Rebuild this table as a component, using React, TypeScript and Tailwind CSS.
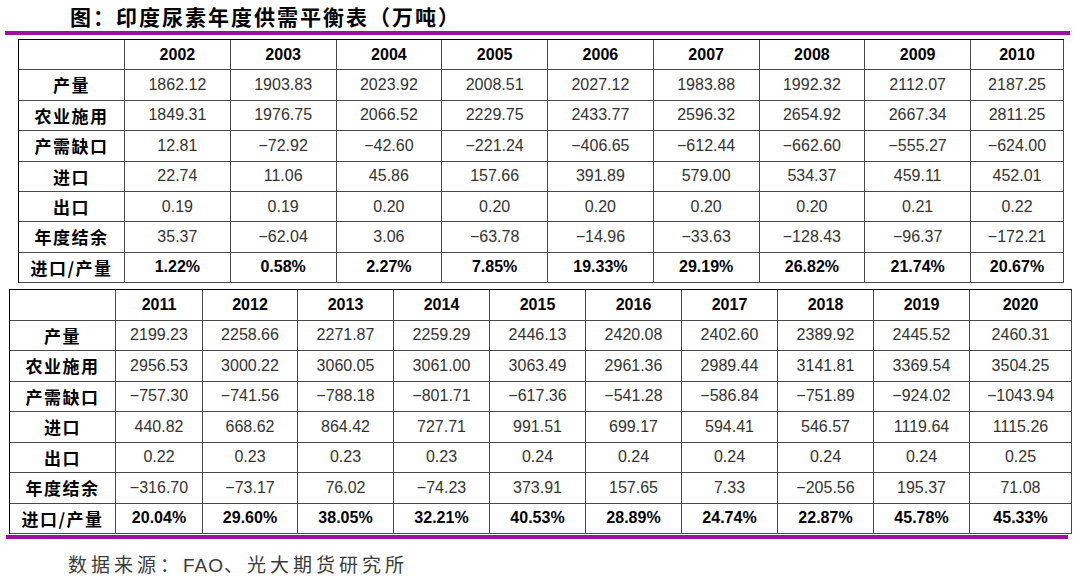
import React from "react";

type Row = { label: string; values: string[]; bold?: boolean };

interface BalanceTableProps {
    years: string[];
    rows: Row[];
    gridClass: string;
    className?: string;
}

const labels = ["产量", "农业施用", "产需缺口", "进口", "出口", "年度结余", "进口/产量"];

const table1: Row[] = [
    ["1862.12", "1903.83", "2023.92", "2008.51", "2027.12", "1983.88", "1992.32", "2112.07", "2187.25"],
    ["1849.31", "1976.75", "2066.52", "2229.75", "2433.77", "2596.32", "2654.92", "2667.34", "2811.25"],
    ["12.81", "−72.92", "−42.60", "−221.24", "−406.65", "−612.44", "−662.60", "−555.27", "−624.00"],
    ["22.74", "11.06", "45.86", "157.66", "391.89", "579.00", "534.37", "459.11", "452.01"],
    ["0.19", "0.19", "0.20", "0.20", "0.20", "0.20", "0.20", "0.21", "0.22"],
    ["35.37", "−62.04", "3.06", "−63.78", "−14.96", "−33.63", "−128.43", "−96.37", "−172.21"],
    ["1.22%", "0.58%", "2.27%", "7.85%", "19.33%", "29.19%", "26.82%", "21.74%", "20.67%"],
].map((values, i) => ({ label: labels[i], values, bold: i === 6 }));

const table2: Row[] = [
    ["2199.23", "2258.66", "2271.87", "2259.29", "2446.13", "2420.08", "2402.60", "2389.92", "2445.52", "2460.31"],
    ["2956.53", "3000.22", "3060.05", "3061.00", "3063.49", "2961.36", "2989.44", "3141.81", "3369.54", "3504.25"],
    ["−757.30", "−741.56", "−788.18", "−801.71", "−617.36", "−541.28", "−586.84", "−751.89", "−924.02", "−1043.94"],
    ["440.82", "668.62", "864.42", "727.71", "991.51", "699.17", "594.41", "546.57", "1119.64", "1115.26"],
    ["0.22", "0.23", "0.23", "0.23", "0.24", "0.24", "0.24", "0.24", "0.24", "0.25"],
    ["−316.70", "−73.17", "76.02", "−74.23", "373.91", "157.65", "7.33", "−205.56", "195.37", "71.08"],
    ["20.04%", "29.60%", "38.05%", "32.21%", "40.53%", "28.89%", "24.74%", "22.87%", "45.78%", "45.33%"],
].map((values, i) => ({ label: labels[i], values, bold: i === 6 }));

const years1 = ["2002", "2003", "2004", "2005", "2006", "2007", "2008", "2009", "2010"];
const years2 = ["2011", "2012", "2013", "2014", "2015", "2016", "2017", "2018", "2019", "2020"];

const cell = "flex items-center justify-center border-r border-b border-[#4a4a4a]";
const num = "font-['Liberation_Sans',Arial,sans-serif] text-[16px]";
const cjk = "font-['Noto_Sans_CJK_SC',sans-serif] font-bold text-[17px] tracking-[1.5px] text-black";

const BalanceTable = ({ years, rows, gridClass, className }: BalanceTableProps) => {
    return (
        <div className={`grid border-t border-l border-black ${gridClass} ${className ?? ""}`}>
            {/* header */}
            <div className={cell} />
            {years.map((y) => (
                <div key={y} className={`${cell} ${num} font-bold text-black`}>
                    {y}
                </div>
            ))}
            {rows.map((row) => (
                <React.Fragment key={row.label}>
                    <div className={`${cell} ${cjk}`}>{row.label}</div>
                    {row.values.map((v, i) => (
                        <div
                            key={i}
                            className={`${cell} ${num} ${row.bold ? "font-bold text-black" : "text-[#333333]"}`}
                        >
                            {v}
                        </div>
                    ))}
                </React.Fragment>
            ))}
        </div>
    );
};

export default function App() {
    return (
        <div className="w-[1080px] h-[587px] bg-white overflow-hidden">
            <div className="h-[31px] pl-[70px] pt-[4px] font-['Noto_Sans_CJK_SC',sans-serif] font-bold text-[21px] leading-[24px] tracking-[2px] text-black">
                图：印度尿素年度供需平衡表（万吨）
            </div>
            <div className="ml-[5px] w-[1065px] h-[4px] bg-[#9b139b]" />

            <BalanceTable
                className="ml-[18px] mt-[4px] w-[1046px]"
                gridClass="grid-cols-[106px_repeat(8,105.75px)_93px] grid-rows-[repeat(8,30.4px)]"
                years={years1}
                rows={table1}
            />

            <BalanceTable
                className="ml-[9px] mt-[6px] w-[1063px]"
                gridClass="grid-cols-[106px_87px_95px_repeat(7,96px)_102px] grid-rows-[repeat(8,30.5px)]"
                years={years2}
                rows={table2}
            />

            <div className="ml-[6px] mt-[1px] w-[1062px] h-[4px] bg-[#9b139b]" />

            <div className="mt-[13px] pl-[68px] font-['Noto_Sans_CJK_SC',sans-serif] text-[19px] leading-[24px] tracking-[4px] text-[#3a3a3a]">
                数据来源：<span className="font-['Liberation_Sans',sans-serif] tracking-[1px]">FAO</span>、光大期货研究所
            </div>
        </div>
    );
}
